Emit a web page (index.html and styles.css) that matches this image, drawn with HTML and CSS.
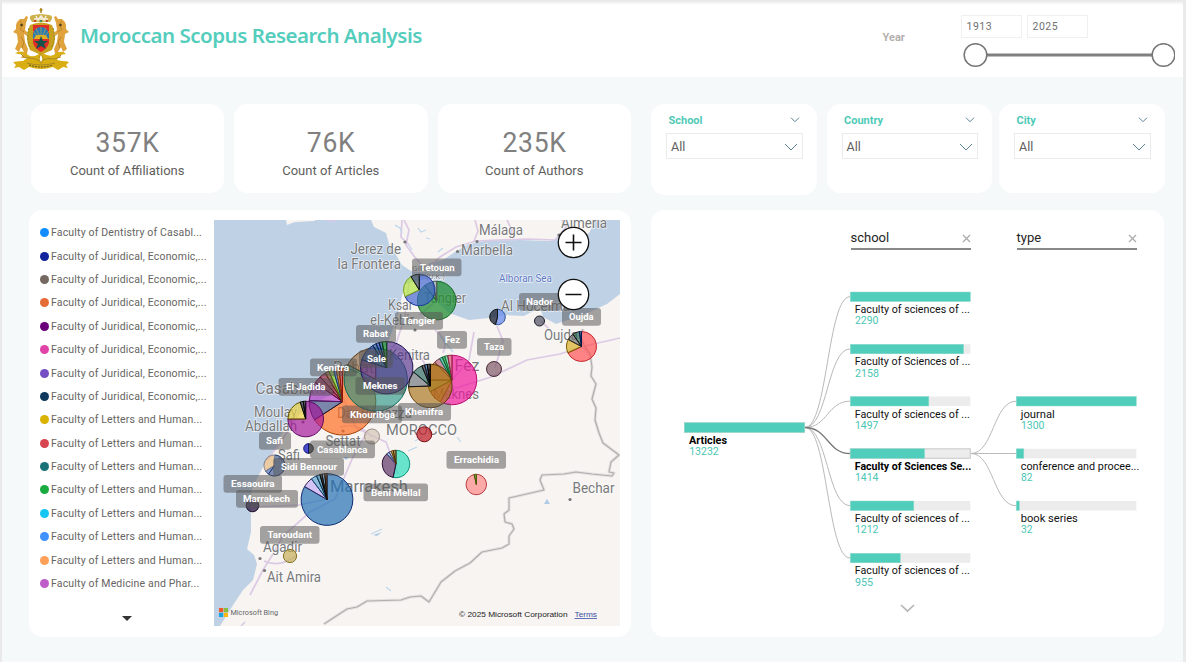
FILE: index.html
```html
<!DOCTYPE html>
<html lang="en">
<head>
<meta charset="utf-8">
<title>Moroccan Scopus Research Analysis</title>
<link rel="stylesheet" href="styles.css">
</head>
<body>
<div class="report">
  <header class="header">
    <svg class="emblem" viewBox="0 0 58 62" width="58" height="62">
      <g fill="#dfa23c">
        <path d="M5 14l3-3 4 0 2-3 2 1-2 6-1 7 3 3-1 3-3-2 1 8 3 7-2 9-5 0 3-6-3-5-2 5-4-3 3-7-1-8-4-2 3-3 0-4z"/>
        <path d="M53 14l-3-3-4 0-2-3-2 1 2 6 1 7-3 3 1 3 3-2-1 8-3 7 2 9 5 0-3-6 3-5 2 5 4-3-3-7 1-8 4-2-3-3 0-4z"/>
      </g>
      <g fill="none" stroke="#b98525" stroke-width="1"><path d="M8 13l3 4-3 4 4 3M50 13l-3 4 3 4-4 3M9 29l3 5-2 6M49 29l-3 5 2 6"/></g>
      <circle cx="9.500" cy="17" r="1.200" fill="#44351b"/><circle cx="48.500" cy="17" r="1.200" fill="#44351b"/>
      <path d="M20 14q-5-6 1-7l8-1 8 1q6 1 1 7z" fill="#cdb04a"/>
      <path d="M22 11h14M24 8l2 4 3-4 3 4 2-4" stroke="#f4efe0" stroke-width="1.500" fill="none"/>
      <path d="M29 0v5M27.500 2h3" stroke="#a98416" stroke-width="1.500"/>
      <circle cx="23" cy="13" r="1" fill="#c52d27"/><circle cx="29" cy="13" r="1" fill="#16875b"/><circle cx="35" cy="13" r="1" fill="#c52d27"/>
      <path d="M18 17q-6 13 0 25l11 5 11-5q6-12 0-25-11-5-22 0z" fill="#c9a01e"/>
      <path d="M17 20q-3 10 1 19M41 20q3 10-1 19" stroke="#8a8b21" fill="none" stroke-dasharray="2 1.500"/>
      <path d="M21 17h16v18q-2 6-8 9-6-3-8-9z" fill="#e02d25"/>
      <path d="M21 31v-5q2-7 8-7t8 7v5z" fill="#287bb1"/>
      <path d="M29 27V19M27 27l-3-7M31 27l3-7M25 28l-4-5M33 28l4-5" stroke="#c9b04b" stroke-width=".6"/>
      <path d="M21 31q2-1 3-4h10q1 3 3 4z" fill="#e0ae24"/>
      <path d="M29 28l2 5h5l-4 3 2 5-5-3-5 3 2-5-4-3h5z" fill="#17514b"/>
      <path d="M3 45q8-4 13 2 5 3 11-1 4-1 8 1 6 2 9-2 7-3 10 1-8 0-9 6l5 1q5 0 7 1l-3 3 2 3-5-1-5 3-5-3q-12 4-24 0l-5 3-5-3-5 1 2-3-3-3q6-1 10-1l4-3q-2-4-9-4z" fill="#d9ae13"/>
      <path d="M9 46q3 5 8 4 6 0 10 3 9-4 17-2 3-1 5-4M15 55q14 4 28 0" fill="none" stroke="#a58a2a" stroke-width="1"/>
      <path d="M29 46q-4 5 0 9 4-4 0-9z" fill="#fff" stroke="#bd9514" stroke-width="1.200"/>
      <path d="M17 57q12 4 24 0" fill="none" stroke="#5c511f" stroke-width="1" stroke-dasharray="2 1"/>
    </svg>
    <h1 class="title">Moroccan Scopus Research Analysis</h1>
    <div class="year">
      <span class="year-name">Year</span>
      <div class="range">
        <div class="range-inputs"><span class="range-input">1913</span><span class="range-input">2025</span></div>
        <svg class="slider" width="214" height="26" viewBox="0 0 214 26"><path d="M15 13H202" stroke="#808080" stroke-width="3"/><g fill="#fff" stroke="#767676" stroke-width="1.500"><circle cx="14.500" cy="13" r="11.300"/><circle cx="202.500" cy="13" r="11.300"/></g></svg>
      </div>
    </div>
  </header>

  <main class="content">
    <section class="left">
      <div class="kpis">
        <article class="card kpi"><strong class="kpi-value">357K</strong><span class="kpi-label">Count of Affiliations</span></article>
        <article class="card kpi"><strong class="kpi-value">76K</strong><span class="kpi-label">Count of Articles</span></article>
        <article class="card kpi"><strong class="kpi-value">235K</strong><span class="kpi-label">Count of Authors</span></article>
      </div>
      <div class="card map-panel">
        <div class="legend">
          <ul class="legend-list" id="legend"></ul>
          <svg class="legend-more" width="10" height="6" viewBox="0 0 10 6"><path d="M0 0H10L5 5z" fill="#333"/></svg>
        </div>
        <svg class="map" viewBox="214 220 406 406" width="406" height="406">
          <rect x="214" y="220" width="406" height="406" fill="#bfd1e5"/>
          <g fill="#f7f4f2">
            <path d="M220 626L225 618 235 602 243 590 253 580 257 564 254 555 247 549 251 532 251 515 250 502 252 489 260 473 266 461 276 449 281 434 292 420 308 407 334 393 365 367 387 345 397 318 402 296 405 284 421 280 433 278 433 291 437 302 449 313 469 320 489 318 505 315 524 316 535 310 539 304 543 317 556 324 574 318 590 312 607 304 620 294V626z"/>
            <path d="M371 220L374 227 386 233 389 244 395 253 402 265 411 271 425 272 429 263 443 260 455 252 469 244 485 241 519 240 550 241 557 238 560 233 568 238 579 240 589 233 596 220z"/>
            <path d="M286 220L287 225 295 222 315 221V220z"/>
          </g>
          <path d="M325 220q7 3 12 0" fill="#d9c5e6"/>
          <g fill="none" stroke="#dccae5" stroke-width="1.700">
            <path d="M404 220l5 10-3 15 8 11 12 14 14-13 16-10 20-6 52-2 27 1 11-13-10-17M475 220l3 11-4 10M507 220l5 10-2 8M409 245l-8-8 1-17"/>
            <path d="M409 282l-4 34-9 28-33 30-55 25-27 43-14 18M391 346l29 10 14 23 22 9 35-11 36-17 33-6 25-8 35-8M437 300l-17 15M497 326l6 15-8 27M452 380l17-20 5-28M343 397l13 31 30 14 12 32M367 432l-14 25-18 42-25 13-27 24-10 18-10 16-13 25M327 499l-28 6-43 2M264 561q15 7 32-5M582 346l9 11M541 321l8 8"/>
            <path d="M372 437q-12-15-32-10M435 330q14 10 8 23M241 626l4-4"/>
          </g>
          <g fill="none" stroke="#bed7ec" stroke-width="1.200"><path d="M395 225l5 3 2 5M418 228l3 4 5-2M426 238l4 1M438 252l5-4M412 250l-3-5M404 320l5 5M440 336l13 16M415 441l8-4M457 437l4 5M371 534l11-5M386 587l5 4M417 447l-9 4"/></g>
          <path d="M544 504l3-5 3 5zM373 535l9-3-5 4zM343 457h6l-3 3z" fill="#aecce6"/>
          <g fill="none" stroke-linejoin="round">
            <path d="M583 329l-3 7 4 9 6 9 2 13-1 9 5 8-4 15 4 9-1 12 4 13 4 10 16 12-8 7-2 10 5 1-2 3-20-2-16-2-12 2-22 1-2 5 4 10-35 8v12l-5 4 1 8 7 2 2 5-5 7v8l-7 4-20 4-12 11-15 8-14 11-12 20-8-6-11 1-9 3-34 1-10 6-10 2-23 15" transform="translate(0 0)" stroke="#e4e0e0" stroke-width="3"/>
            <path d="M583 329l-3 7 4 9 6 9 2 13-1 9 5 8-4 15 4 9-1 12 4 13 4 10 16 12-8 7-2 10 5 1-2 3-20-2-16-2-12 2-22 1-2 5 4 10-35 8v12l-5 4 1 8 7 2 2 5-5 7v8l-7 4-20 4-12 11-15 8-14 11-12 20-8-6-11 1-9 3-34 1-10 6-10 2-23 15" stroke="#b1aeae" stroke-width="1.200"/>
          </g>
          <g fill="#777"><circle cx="405" cy="242" r="1.600"/><circle cx="477" cy="241.500" r="1.600"/><circle cx="457.500" cy="251.500" r="1.600"/><circle cx="415" cy="330" r="1.600"/><circle cx="570" cy="499.500" r="1.600"/><circle cx="260" cy="558.500" r="1.600"/><circle cx="264.500" cy="570.500" r="1.600"/><circle cx="343" cy="431" r="1.600"/><circle cx="303" cy="422" r="1.600"/><circle cx="559" cy="235" r="1.600"/></g>
          <g class="places" id="places"></g>
          <g id="pies" stroke-width="1"></g>
          <g class="tags" id="tags"></g>
          <g stroke="#111" fill="#fff"><circle cx="573.500" cy="242.500" r="15.200" stroke-width="1.300"/><circle cx="573.500" cy="294.500" r="15.200" stroke-width="1.300"/><path d="M565.500 242.500h16M573.500 234.500v16M565.500 294.500h16" stroke-width="1.600"/></g>
          <path d="M219 608h4.200v4.200H219z" fill="#f1592a"/><path d="M223.800 608h4.200v4.200h-4.200z" fill="#86bd3c"/><path d="M219 612.800h4.200v4.200H219z" fill="#18a5e5"/><path d="M223.800 612.800h4.200v4.200h-4.200z" fill="#fcb813"/>
          <text x="230.500" y="615.300" class="bing" textLength="47.500" lengthAdjust="spacingAndGlyphs">Microsoft Bing</text>
          <text x="459" y="617" class="copyright" textLength="108.500" lengthAdjust="spacingAndGlyphs">© 2025 Microsoft Corporation</text>
          <text x="574.500" y="617" class="terms" textLength="22.500" lengthAdjust="spacingAndGlyphs">Terms</text>
        </svg>
      </div>
    </section>

    <section class="right">
      <div class="slicers">
        <article class="card slicer slicer-tall"><div class="slicer-head"><span>School</span><svg width="10" height="6" viewBox="0 0 10 6"><path d="M1 .700l4 4 4-4"/></svg></div><div class="select"><span>All</span><svg width="14" height="8" viewBox="0 0 14 8"><path d="M1 1l6 6 6-6"/></svg></div></article>
        <article class="card slicer"><div class="slicer-head"><span>Country</span><svg width="10" height="6" viewBox="0 0 10 6"><path d="M1 .700l4 4 4-4"/></svg></div><div class="select"><span>All</span><svg width="14" height="8" viewBox="0 0 14 8"><path d="M1 1l6 6 6-6"/></svg></div></article>
        <article class="card slicer"><div class="slicer-head"><span>City</span><svg width="10" height="6" viewBox="0 0 10 6"><path d="M1 .700l4 4 4-4"/></svg></div><div class="select"><span>All</span><svg width="14" height="8" viewBox="0 0 14 8"><path d="M1 1l6 6 6-6"/></svg></div></article>
      </div>
      <div class="card tree-panel">
        <div class="levels">
          <div class="level"><span>school</span><svg width="9" height="9" viewBox="0 0 9 9"><path d="M1 1l7 7M8 1l-7 7"/></svg></div>
          <div class="level"><span>type</span><svg width="9" height="9" viewBox="0 0 9 9"><path d="M1 1l7 7M8 1l-7 7"/></svg></div>
        </div>
        <svg class="tree" viewBox="651 250 513 387" width="513" height="387">
          <g id="links" fill="none" stroke="#b9b9b9" stroke-width="1"></g>
          <g id="nodes"></g>
          <path d="M901 605l6.500 6 6.500-6" fill="none" stroke="#b5b5b5" stroke-width="1.700"/>
        </svg>
      </div>
    </section>
  </main>
</div>
<script src="report.js"></script>
</body>
</html>
```
FILE: styles.css
```css
* { box-sizing: border-box; }
body { margin: 0; font-family: Roboto, "Liberation Sans", sans-serif; overflow: hidden; }
.report { width: 1186px; height: 662px; background: #f5f9fa; border-left: 2px solid #e9e9e9; border-right: 3px solid #e9eaea; }
.header { height: 77px; display: flex; align-items: flex-start; background: linear-gradient(#e6e6e6, #fff 5px); }
.emblem { margin: 8px 0 0 10px; flex: none; }
.title { margin: 20px 0 0 10px; width: 344px; white-space: nowrap; font: 600 20.5px/30px "Noto Sans", sans-serif; color: #54cdbd; letter-spacing: -0.48px; }
.year { display: flex; margin-left: auto; width: 300.500px; }
.year-name { width: 80px; padding-top: 30px; font-size: 11px; line-height: 15px; font-weight: 700; color: #b3b0ad; }
.range { padding-top: 15px; }
.range-inputs { display: flex; gap: 5px; height: 23px; }
.range-input { width: 61px; height: 23px; border: 1px solid #f0f0f0; padding-left: 5px; font-size: 10.5px; line-height: 22px; letter-spacing: .5px; color: #707070; }
.slider { display: block; margin-top: 4px; }
.range-inputs, .slider { margin-left: -2px; }

.content { display: flex; padding: 27px 0 0 27px; }
.card { background: #fff; border-radius: 14px; }
.left { width: 602px; margin-right: 20px; }
.kpis { display: grid; grid-template-columns: repeat(3, 193.500px); gap: 10px; padding-left: 1.500px; height: 106px; }
.kpi { height: 89px; display: flex; flex-direction: column; align-items: center; padding-top: 23px; }
.kpi-value { font-weight: 400; font-size: 28.500px; line-height: 32px; color: #808080; transform: scaleX(.93); letter-spacing: .8px; }
.kpi-label { margin-top: 3px; font-size: 13px; line-height: 18px; color: #605e5c; }
.map-panel { height: 427px; display: flex; padding-top: 10px; }
.legend { width: 185px; padding-left: 11px; }
.legend-list { list-style: none; margin: 0; padding: 1px 0 0; height: 392px; }
.legend-item { display: flex; align-items: center; gap: 2px; height: 23.400px; font-size: 10.500px; color: #666462; letter-spacing: .170px; white-space: nowrap; }
.legend-dot { width: 9px; height: 9px; border-radius: 50%; flex: none; }
.legend-more { display: block; margin: 4px 0 0 82px; }
.map { flex: none; }
.places { font-family: Roboto, sans-serif; fill: #77797b; stroke: #fff; stroke-opacity: .7; stroke-width: 1.500px; paint-order: stroke; }
.tags text { font-weight: 700; font-size: 9.700px; fill: #fff; }
.tags rect { fill: #555; fill-opacity: .52; }
.bing { font: 8px Roboto, sans-serif; fill: #666; }
.copyright, .terms { font: 8px "Liberation Sans", sans-serif; fill: #222; }
.terms { fill: #3a4fa5; text-decoration: underline; }

.slicers { display: flex; height: 106px; }
.slicer { width: 165.500px; height: 89px; padding: 8px 14px 0 15px; margin-right: 7px; }
.slicer-tall { height: 90.500px; margin-right: 10px; }
.slicer-head { display: flex; justify-content: space-between; align-items: center; height: 16px; padding: 0 3px 0 2.500px; color: #4fcab8; font-size: 11px; font-weight: 700; }
.slicer svg { fill: none; stroke: #5b8296; stroke-width: 1; }
.select { display: flex; justify-content: space-between; align-items: center; height: 26px; margin-top: 5px; padding: 1px 4px 0 4px; border: 1px solid #e9ebec; font-size: 12.500px; color: #605e5c; }
.tree-panel { width: 513px; height: 427px; }
.levels { display: flex; gap: 46px; height: 40px; padding: 18px 0 0 199.500px; }
.level { display: flex; justify-content: space-between; align-items: center; width: 120px; height: 21.500px; border-bottom: 2px solid #8a8787; font-size: 13px; color: #252423; }
.level svg { stroke: #aaa; fill: none; stroke-width: 1.200; margin-top: 2px; }
.tree { display: block; }
.tree text { font-size: 10.800px; fill: #111; }
.tree .strong { font-weight: 700; fill: #000; }
.tree .count { fill: #4bc6b4; }
```
FILE: report.js
```js
const SVG = "http://www.w3.org/2000/svg";
function add(parent, tag, attrs, text) {
  const el = document.createElementNS(SVG, tag);
  for (const k in attrs) el.setAttribute(k, attrs[k]);
  if (text) el.textContent = text;
  parent.appendChild(el);
  return el;
}
const byId = id => document.getElementById(id);

const J = "Faculty of Juridical, Economic,...", L = "Faculty of Letters and Human...";
[["#118dff", "Faculty of Dentistry of Casabl..."], ["#12239e", J], ["#746860", J], ["#e66c37", J], ["#6b007b", J],
 ["#e044a7", J], ["#744ec2", J], ["#0f3a5e", J], ["#d9b300", L], ["#d64550", L], ["#197278", L], ["#1aab40", L],
 ["#15c6f4", L], ["#4092ff", L], ["#ffa058", L], ["#be5dc9", "Faculty of Medicine and Phar..."]
].forEach(([color, name]) => {
  const li = document.createElement("li");
  li.className = "legend-item";
  const dot = document.createElement("span");
  dot.className = "legend-dot";
  dot.style.background = color;
  li.append(dot, name);
  byId("legend").appendChild(li);
});

// name, x, baseline, width, size
[["Jerez de", 350.5, 254.3, 50.5, 14], ["la Frontera", 337.5, 269, 63.5, 14], ["Ksar", 388, 310, 25, 14], ["el-Kebir", 370, 324.5, 44, 14],
 ["Casablanca", 255.500, 394, 80, 16], ["Moulay", 254, 417, 43, 14], ["Abdallah", 245, 431, 52, 14], ["Kenitra", 389, 360, 41, 14],
 ["Rabat", 333, 373, 41, 17], ["Dar Bouazza", 337, 418, 75, 15], ["MOROCCO", 386, 435, 71, 15], ["Settat", 325.500, 446, 35, 14],
 ["Safi", 278, 460, 22, 14], ["Marrakesh", 330, 492, 78, 17], ["Agadir", 263, 552, 39, 14], ["Ait Amira", 267, 582, 54, 14],
 ["Málaga", 479, 235, 44, 14], ["Marbella", 461, 255, 52, 14], ["Almería", 561, 228, 46, 14],
 ["Tangier", 424, 303, 42, 14], ["Al Hoceima", 501, 311, 69, 14], ["Oujda", 544, 340, 34, 14], ["Fez", 454.500, 371, 25, 17],
 ["Meknes", 433, 399, 46, 14], ["Bechar", 572.500, 493, 42, 14], ["GIBRALTAR", 412, 271, 42, 8], ["(U.K.)", 426, 279, 19, 8]
].forEach(([t, x, y, w, s]) => add(byId("places"), "text", {x, y, textLength: w, lengthAdjust: "spacingAndGlyphs", "font-size": s}, t));
add(byId("places"), "text", {x: 499, y: 282, textLength: 53, lengthAdjust: "spacingAndGlyphs", "font-size": 10.500, style: "fill:#5b78c4"}, "Alboran Sea");

// cx, cy, r, slices as [end angle, fill, outline], opacity
function pie(cx, cy, r, slices, opacity = .68) {
  let a = 0;
  const at = d => [cx + r * Math.sin(d * Math.PI / 180), cy - r * Math.cos(d * Math.PI / 180)].map(v => v.toFixed(2)).join(" ");
  for (const [end, fill, stroke] of slices) {
    const base = {fill, stroke, "fill-opacity": opacity};
    if (end - a >= 360) add(byId("pies"), "circle", {cx, cy, r, ...base});
    else add(byId("pies"), "path", {d: `M${cx} ${cy}L${at(a)}A${r} ${r} 0 ${end - a > 180 ? 1 : 0} 1 ${at(end)}Z`, ...base});
    a = end;
  }
}
pie(436.7, 300.6, 19.3, [[322, "#1a8a2c", "#126b20"], [348, "#2a8140", "#126b20"], [360, "#a8b8a8", "#555"]], .72);
pie(419.3, 290, 15.8, [[245, "#3f62d2", "#1c3d9c"], [328, "#b0e33c", "#7aa020"], [360, "#334455", "#111"]]);
pie(497.5, 317, 7.8, [[195, "#6f92ea", "#34549c"], [360, "#222b3e", "#111"]], .8);
pie(539.5, 321, 5, [[360, "#4a4a5e", "#1c1c28"]]);
pie(581.5, 346.5, 15, [[245, "#ff4d50", "#c8262a"], [298, "#d9ad20", "#7a5b00"], [325, "#6d6d6d", "#222"], [352, "#23614c", "#111"], [360, "#24488f", "#001850"]]);
pie(494, 369, 7.5, [[360, "#7a5263", "#4b2b38"]]);
pie(342.5, 401.7, 33.300, [[237, "#ff6a1c", "#a33e00"], [272, "#3e5387", "#10122e"], [305, "#b33ec4", "#5a0e66"], [318, "#9b1650", "#600028"], [329, "#b02c48", "#5e0c20"], [336, "#9a5a2c", "#55300d"], [344, "#89d122", "#457800"], [349, "#4873d0", "#113478"], [354, "#f5992f", "#804400"], [360, "#d83a2c", "#8e1208"]]);
pie(375.7, 379.5, 31.700, [[298, "#1d8f7e", "#076956"], [360, "#a46c33", "#5b3a18"]], .6);
pie(386.7, 367.7, 26.200, [[288, "#53308d", "#1d1458"], [328, "#254a9c", "#0d2460"], [336, "#2f66a8", "#0b1d4d"], [343, "#3152bc", "#0b1d4d"], [350, "#174a7c", "#06183a"], [360, "#0d8020", "#044b0b"]], .66);
pie(452, 380, 24.800, [[208, "#f0189c", "#bd0a70"], [242, "#d84820", "#7a2a00"], [270, "#b08516", "#604500"], [316, "#c86a24", "#783c0c"], [330, "#b66a80", "#703044"], [337, "#39b89a", "#0d6b55"], [343, "#22a642", "#075c1a"], [350, "#63c795", "#157142"], [360, "#e0527a", "#902040"]], .7);
pie(430.3, 386, 21.800, [[268, "#a8751d", "#5c3a06"], [310, "#6f747c", "#111"], [337, "#2e6a63", "#0d2522"], [345, "#222", "#111"], [352, "#3566a4", "#0b1830"], [360, "#111", "#000"]], .68);
pie(305.7, 419, 17.800, [[270, "#a3149a", "#5b0a60"], [342, "#ead13c", "#605000"], [352, "#303038", "#0a0a0a"], [360, "#1c2238", "#0a0a0a"]]);
pie(372, 436.5, 7.500, [[360, "#d1c2b6", "#a08e82"]]);
pie(424.3, 434.3, 7.500, [[360, "#c2242e", "#7d0b12"]], .75);
pie(308.5, 448.5, 4.800, [[180, "#333", "#111"], [360, "#2026c0", "#0c1078"]], .8);
pie(274.5, 465.5, 10.500, [[215, "#46609e", "#223463"], [238, "#5878bc", "#2a4278"], [360, "#e6b67c", "#7c8292"]]);
pie(327, 499.5, 25.900, [[300, "#2370b5", "#102d72"], [323, "#c6aef7", "#30245c"], [336, "#62a3d0", "#164a73"], [344, "#3a84a8", "#0a304a"], [349, "#111", "#000"], [355, "#5592c0", "#111"], [360, "#6a3f25", "#221000"]], .7);
pie(396, 464, 13.700, [[192, "#22dcb8", "#079076"], [318, "#5a2f63", "#2d1134"], [330, "#7ba2d8", "#304a80"], [340, "#c3b6e4", "#4a4060"], [348, "#e4b81a", "#604b00"], [360, "#8a5b20", "#4b2d06"]]);
pie(476.3, 484.5, 10.200, [[348, "#ff8585", "#b93a3e"], [360, "#5d8a0c", "#3d6000"]]);
pie(252.5, 505.5, 6.300, [[360, "#33214a", "#160a25"]], .8);
pie(290, 556, 6.600, [[360, "#c3ad52", "#857225"]]);

// label, box left, box right, box top, text left, text right
[["Tetouan", 412, 461.5, 258.500, 420, 454.5], ["Tangier", 395, 443, 312, 402, 435.5], ["Rabat", 356, 396, 325, 363, 388], ["Kenitra", 310, 357, 358.500, 317, 349],
 ["El Jadida", 278.5, 333, 378, 286, 325.5], ["Sale", 359, 393, 350, 367, 386], ["Meknes", 355.5, 405, 377, 363, 397.5], ["Khouribga", 342, 402, 405.500, 350, 395],
 ["Khenifra", 398, 451, 403, 405, 443], ["Fez", 437, 467, 331, 445, 460], ["Taza", 477, 511.5, 338, 484, 504], ["Nador", 519, 561, 293, 526, 553],
 ["Oujda", 562, 601, 308, 569, 593.5], ["Safi", 259, 291, 432, 266, 283], ["Casablanca", 310, 375, 440.500, 317, 367.5], ["Sidi Bennour", 273, 344, 458, 281, 337],
 ["Essaouira", 223.5, 282, 475, 231, 274.5], ["Marrakech", 236, 298, 490, 243, 290], ["Taroudant", 260, 319.5, 526, 267.5, 312], ["Beni Mellal", 363.5, 428, 483.500, 371, 420.5],
 ["Errachidia", 446.5, 506, 451, 454, 499]
].forEach(([t, l, r, y, a, b]) => {
  add(byId("tags"), "rect", {x: l, y, width: r - l, height: 17.800, rx: 3});
  add(byId("tags"), "text", {x: a, y: y + 12, textLength: b - a, lengthAdjust: "spacingAndGlyphs"}, t);
});

const BAR = 120;
function node(x, y, fill, name, nameWidth, count, countWidth, opts = {}) {
  const g = byId("nodes");
  add(g, "rect", {x, y, width: BAR, height: 9.500, fill: "#ececec", stroke: opts.outlined ? "#c8c8c8" : "none"});
  add(g, "rect", {x, y, width: fill, height: 9.500, fill: "#50cdbb", stroke: "#8fdccf", "stroke-width": .5});
  add(g, "text", {x: x + 4.5, y: y + 21, textLength: nameWidth, lengthAdjust: "spacingAndGlyphs", class: opts.bold ? "strong" : ""}, name);
  add(g, "text", {x: x + 4.7, y: y + 32.3, textLength: countWidth, lengthAdjust: "spacingAndGlyphs", class: "count"}, count);
}
function link(x1, y1, x2, y2, stroke) {
  const m = (x1 + x2) / 2;
  add(byId("links"), "path", {d: `M${x1} ${y1}C${m} ${y1} ${m} ${y2} ${x2} ${y2}`, ...(stroke ? {stroke, "stroke-width": 1.300} : {})});
}
const rows = [292, 344.3, 396.5, 448.8, 501, 553.3];
rows.forEach((y, i) => { if (i !== 3) link(805, 427.5, 850, y + 4.700); });
link(805, 427.5, 850, 453.500, "#777");
[396.5, 448.8, 501].forEach(y => link(971, 453.500, 1016, y + 4.700));
node(684.5, 422.8, 120, "Articles", 38, "13232", 29.500, {bold: true, outlined: true});
node(850.3, rows[0], 120, "Faculty of sciences of ...", 115, "2290", 23.500);
node(850.3, rows[1], 113.3, "Faculty of Sciences of ...", 115.500, "2158", 24);
node(850.3, rows[2], 78.5, "Faculty of sciences of ...", 115, "1497", 23.500);
node(850.3, rows[3], 74.3, "Faculty of Sciences Se...", 116.500, "1414", 23.500, {bold: true, outlined: true});
node(850.3, rows[4], 63.5, "Faculty of sciences of ...", 115, "1212", 23.500);
node(850.3, rows[5], 50, "Faculty of sciences of ...", 115, "955", 18);
node(1016.3, rows[2], 120, "journal", 34, "1300", 23.500);
node(1016.3, rows[3], 7.5, "conference and procee...", 118.500, "82", 11.500);
node(1016.3, rows[4], 3, "book series", 57, "32", 11.500);
```
